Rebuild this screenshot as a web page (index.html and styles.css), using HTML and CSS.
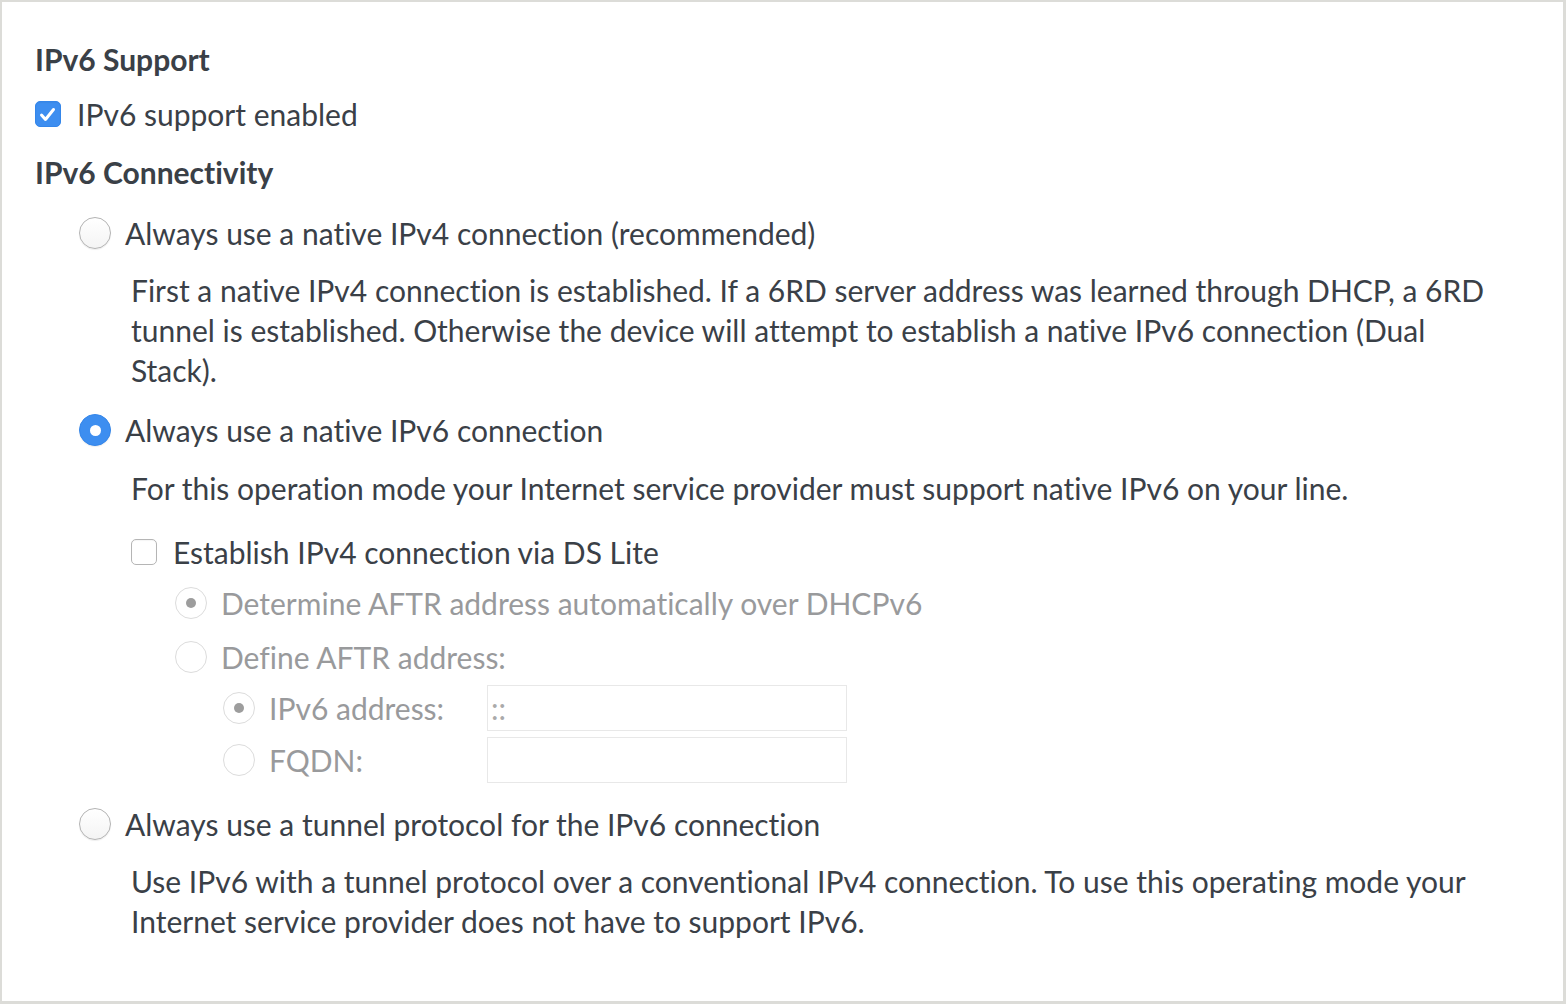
FILE: index.html
```html
<!DOCTYPE html>
<html lang="en">
<head>
<meta charset="utf-8">
<title>IPv6 Settings</title>
<link rel="stylesheet" href="styles.css">
</head>
<body>
<div class="panel">
  <h2 class="heading">IPv6 Support</h2>
  <label class="check-row row-support">
    <span class="checkbox checked">
      <svg viewBox="0 0 26 26" width="26" height="26"><polyline points="6.5,14 10.5,18.5 18.5,8.5" fill="none" stroke="#fff" stroke-width="3" stroke-linecap="round" stroke-linejoin="round"/></svg>
    </span>
    <span class="label">IPv6 support enabled</span>
  </label>
  <h2 class="heading heading-conn">IPv6 Connectivity</h2>

  <div class="options">
    <label class="radio-row opt-first">
      <span class="radio"></span>
      <span class="label">Always use a native IPv4 connection (recommended)</span>
    </label>
    <p class="desc">First a native IPv4 connection is established. If a 6RD server address was learned through DHCP, a 6RD tunnel is established. Otherwise the device will attempt to establish a native IPv6 connection (Dual Stack).</p>

    <label class="radio-row opt">
      <span class="radio checked"></span>
      <span class="label">Always use a native IPv6 connection</span>
    </label>
    <p class="desc">For this operation mode your Internet service provider must support native IPv6 on your line.</p>

    <div class="dslite">
      <label class="check-row">
        <span class="checkbox"></span>
        <span class="label">Establish IPv4 connection via DS Lite</span>
      </label>
      <div class="sub">
        <label class="radio-row disabled sub-first">
          <span class="radio checked"></span>
          <span class="label">Determine AFTR address automatically over DHCPv6</span>
        </label>
        <label class="radio-row disabled sub-second">
          <span class="radio"></span>
          <span class="label">Define AFTR address:</span>
        </label>
        <div class="aftr-grid">
          <label class="radio-row disabled">
            <span class="radio checked"></span>
            <span class="label">IPv6 address:</span>
          </label>
          <div class="input"><span class="input-text">::</span></div>
          <label class="radio-row disabled">
            <span class="radio"></span>
            <span class="label">FQDN:</span>
          </label>
          <div class="input"></div>
        </div>
      </div>
    </div>

    <label class="radio-row opt-last">
      <span class="radio"></span>
      <span class="label">Always use a tunnel protocol for the IPv6 connection</span>
    </label>
    <p class="desc">Use IPv6 with a tunnel protocol over a conventional IPv4 connection. To use this operating mode your Internet service provider does not have to support IPv6.</p>
  </div>
</div>
</body>
</html>
```
FILE: styles.css
```css
* { box-sizing: border-box; }
html, body { margin: 0; padding: 0; background: #fff; }
body {
  font-family: "Lato", "Liberation Sans", sans-serif;
  font-size: 30px;
  line-height: 40px;
  color: #3a4047;
  font-variant-ligatures: none;
  font-feature-settings: "liga" 0;
}
.panel {
  width: 1566px;
  height: 1004px;
  border-style: solid;
  border-color: #dcdcd8;
  border-width: 2px 3px 3px 2px;
  padding: 37px 63px 0 33px;
  overflow: hidden;
}
.heading {
  margin: 0;
  font-size: 30px;
  font-weight: 700;
  line-height: 40px;
  color: #3a4047;
}
.heading-conn { margin-top: 18px; }

.check-row, .radio-row {
  display: flex;
  align-items: center;
  height: 40px;
  white-space: nowrap;
}
.row-support { margin-top: 15px; }
.checkbox {
  flex: none;
  width: 26px;
  height: 26px;
  border-radius: 5px;
  border: 1px solid #b5b5b5;
  background: #fff;
  margin-right: 16px;
  display: flex;
  box-shadow: inset 0 1px 1px rgba(0,0,0,0.04);
}
.checkbox.checked {
  background: #3d8ef0;
  border-color: #3486ea;
}
.checkbox svg { display: block; margin: -1px; }

.radio {
  flex: none;
  width: 32px;
  height: 32px;
  border-radius: 50%;
  border: 1px solid #b3b3b3;
  background: linear-gradient(#ffffff, #f4f4f4);
  box-shadow: 0 1px 1px rgba(0,0,0,0.07);
  margin-right: 14px;
  display: flex;
  align-items: center;
  justify-content: center;
}
.radio.checked {
  background: #3d8ef0;
  border-color: #3486ea;
}
.radio.checked::after {
  content: "";
  width: 11px;
  height: 11px;
  border-radius: 50%;
  background: #fff;
}
.disabled { color: #999a9c; }
.disabled .radio {
  border-color: #dcdcdc;
  background: #fff;
  box-shadow: none;
}
.disabled .radio.checked { background: #fff; }
.disabled .radio.checked::after {
  width: 10px;
  height: 10px;
  background: #9d9d9d;
}

.options { padding-left: 44px; }
.opt-first { margin-top: 21px; }
.opt { margin-top: 20px; }
.opt-last { margin-top: 21px; }
.desc {
  margin: 17px 0 0 52px;
  line-height: 40px;
}
.opt + .desc { margin-top: 18px; }

.dslite {
  margin-top: 24px;
  padding-left: 52px;
}
.sub { padding-left: 44px; }
.sub-first { margin-top: 11px; }
.sub-second { margin-top: 14px; }

.aftr-grid {
  margin-top: 8px;
  padding-left: 48px;
  display: grid;
  grid-template-columns: 264px 360px;
  grid-auto-rows: 46px;
  row-gap: 6px;
  align-items: center;
}
.aftr-grid .radio-row { height: 46px; }
.input {
  height: 46px;
  border: 1px solid #e8e8e8;
  background: #fff;
  padding-left: 3px;
  display: flex;
  align-items: center;
}
.input-text {
  color: #aaaaaa;
  font-size: 30px;
}
```
